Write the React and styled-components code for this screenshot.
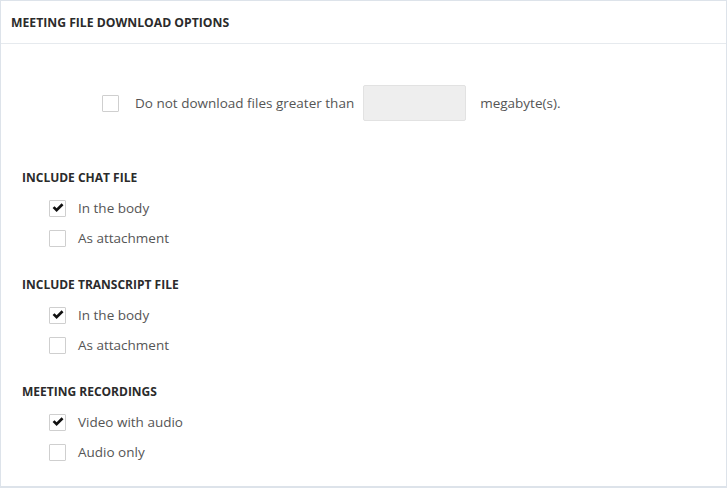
import styled, { createGlobalStyle } from "styled-components";

const Global = createGlobalStyle`
  html, body { margin: 0; padding: 0; background: #fff; }
  body { font-family: "Open Sans", "Liberation Sans", sans-serif; }
`;

const Panel = styled.div`
  width: 727px;
  height: 488px;
  box-sizing: border-box;
  border: 1px solid #dde3ea;
  border-bottom-width: 2px;
  background: #fff;
`;

const Header = styled.div`
  height: 43px;
  box-sizing: border-box;
  border-bottom: 1px solid #e6eaee;
  display: flex;
  align-items: center;
  padding-left: 10px;
  font-size: 12.2px;
  font-weight: 700;
  color: #2b2b2b;
`;

const Body = styled.div`
  padding: 41px 0 0 21px;
`;

const LimitRow = styled.div`
  display: flex;
  align-items: center;
  padding-left: 80px;
  margin-bottom: 50px;
`;

const Label = styled.label`
  display: flex;
  align-items: center;
  height: 18px;
  line-height: 18px;
  font-size: 13.5px;
  color: #555;
  cursor: pointer;
`;

const Box = styled.span`
  width: 17px;
  height: 17px;
  box-sizing: border-box;
  border: 1px solid #cfcfcf;
  border-radius: 1px;
  background: #fff;
  display: inline-flex;
  align-items: center;
  justify-content: center;
  margin-right: ${p => p.$gap}px;
  flex-shrink: 0;
`;

const SizeInput = styled.input`
  width: 103px;
  height: 36px;
  box-sizing: border-box;
  border: 1px solid #e2e2e2;
  border-radius: 2px;
  background: #eeeeee;
  margin: 0 14px 0 9px;
  outline: none;
`;

const Unit = styled.span`
  font-size: 13.5px;
  color: #555;
`;

const Section = styled.div`
  margin-bottom: 31px;
`;

const Heading = styled.div`
  font-size: 12px;
  font-weight: 700;
  color: #2b2b2b;
  height: 14px;
  line-height: 14px;
  margin-bottom: 14px;
`;

const Options = styled.div`
  display: flex;
  flex-direction: column;
  gap: 12px;
  padding-left: 27px;
`;

function Check({ checked, gap = 12 }) {
  return (
    <Box $gap={gap}>
      {checked && (
        <svg width="12" height="10" viewBox="0 0 12 10">
          <path d="M0.6 5.1 L2.5 3.2 L4.6 5.2 L9.6 0.3 L11.5 2.2 L4.6 9.1 Z" fill="#111" />
        </svg>
      )}
    </Box>
  );
}

const sections = [
  { title: "INCLUDE CHAT FILE", options: [["In the body", true], ["As attachment", false]] },
  { title: "INCLUDE TRANSCRIPT FILE", options: [["In the body", true], ["As attachment", false]] },
  { title: "MEETING RECORDINGS", options: [["Video with audio", true], ["Audio only", false]] },
];

export default function App() {
  return (
    <>
      <Global />
      <Panel>
        <Header>MEETING FILE DOWNLOAD OPTIONS</Header>
        <Body>
          <LimitRow>
            <Label>
              <Check gap={16} />
              Do not download files greater than
            </Label>
            <SizeInput type="text" />
            <Unit>megabyte(s).</Unit>
          </LimitRow>
          {sections.map(s => (
            <Section key={s.title}>
              <Heading>{s.title}</Heading>
              <Options>
                {s.options.map(([text, on]) => (
                  <Label key={text}>
                    <Check checked={on} />
                    {text}
                  </Label>
                ))}
              </Options>
            </Section>
          ))}
        </Body>
      </Panel>
    </>
  );
}
